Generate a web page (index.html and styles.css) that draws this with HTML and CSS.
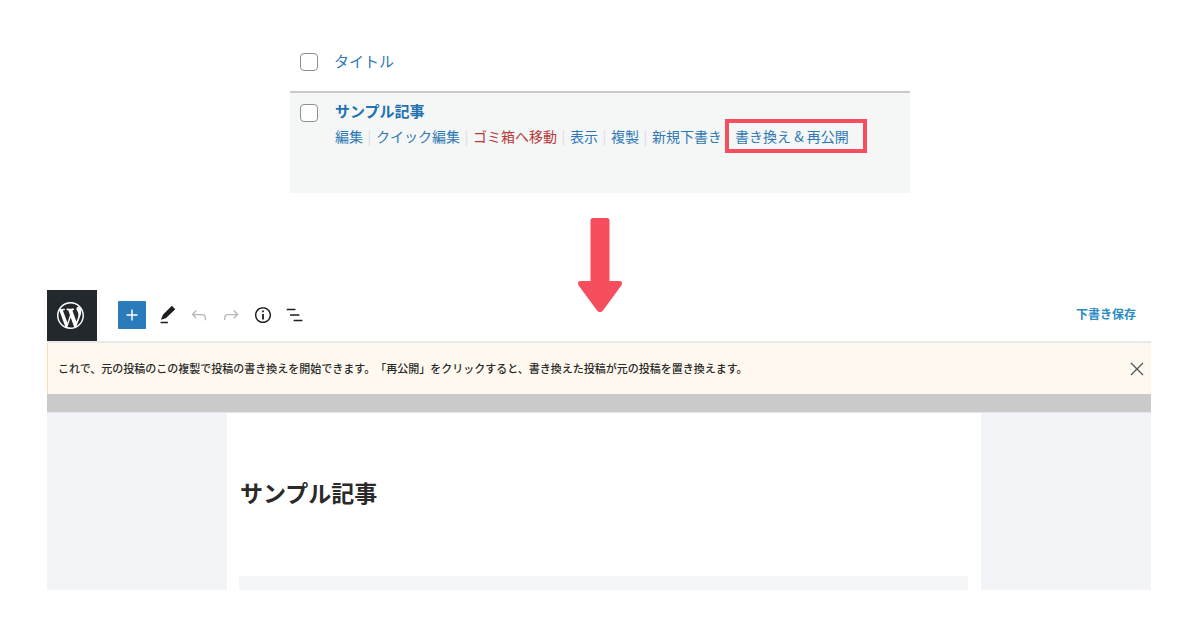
FILE: index.html
```html
<!DOCTYPE html>
<html lang="ja">
<head>
    <meta charset="UTF-8">
    <meta name="viewport" content="width=device-width, initial-scale=1.0">
    <title>サンプル記事</title>
    <link rel="stylesheet" href="styles.css">
</head>
<body>
    <section class="post-list">
        <div class="list-head">
            <input type="checkbox" id="check-all" aria-label="すべて選択">
            <a href="#" class="column-title">タイトル</a>
        </div>
        <div class="list-row">
            <input type="checkbox" id="check-post" aria-label="サンプル記事を選択">
            <div class="post">
                <a href="#" class="post-title">サンプル記事</a>
                <div class="row-actions">
                    <a href="#">編集</a><span>|</span>
                    <a href="#">クイック編集</a><span>|</span>
                    <a href="#" class="trash">ゴミ箱へ移動</a><span>|</span>
                    <a href="#">表示</a><span>|</span>
                    <a href="#">複製</a><span>|</span>
                    <a href="#">新規下書き</a><span>|</span>
                    <a href="#" class="highlight">書き換え &amp; 再公開</a>
                </div>
            </div>
        </div>
    </section>

    <svg class="arrow" viewBox="0 0 44 95" aria-hidden="true">
        <path d="M15 0h14q2.500 0 2.500 2.500V63H41.500q4 0.500 1.800 4.500L25 92.500q-3 3.500-6 0L0.700 67.500q-2.200-4 1.800-4.500H12.500V2.500Q12.500 0 15 0z"/>
    </svg>

    <section class="editor">
        <header class="toolbar">
            <a href="#" class="wp-logo" aria-label="投稿を表示">
                <svg viewBox="0 0 20 20">
                    <path d="M20 10c0-5.510-4.490-10-10-10S0 4.490 0 10c0 5.520 4.490 10 10 10s10-4.480 10-10zM7.780 15.370L4.370 6.220c.55-.02 1.170-.08 1.170-.08.5-.06.44-1.130-.06-1.110 0 0-1.450.11-2.370.11-.18 0-.37 0-.58-.01C4.120 2.690 6.870 1.110 10 1.110c2.330 0 4.450.87 6.050 2.340-.68-.11-1.650.39-1.650 1.580 0 .74.45 1.360.9 2.100.35.61.55 1.360.55 2.460 0 1.490-1.400 5-1.400 5l-3.030-8.370c.54-.02.82-.17.82-.17.5-.05.44-1.250-.06-1.220 0 0-1.440.12-2.380.12-.87 0-2.330-.12-2.330-.12-.5-.03-.56 1.200-.06 1.220l.92.080 1.260 3.410zM17.410 10c.24-.64.74-1.870.43-4.250.7 1.290 1.050 2.710 1.050 4.250 0 3.290-1.730 6.240-4.400 7.780.97-2.590 1.940-5.200 2.920-7.780zM6.100 18.090C3.120 16.650 1.110 13.530 1.110 10c0-1.300.23-2.480.72-3.590C3.250 10.300 4.670 14.200 6.100 18.090zm4.030-6.630l2.580 6.980c-.86.290-1.760.45-2.710.45-.79 0-1.570-.11-2.290-.33.810-2.380 1.620-4.740 2.420-7.100z"/>
                </svg>
            </a>
            <div class="tools">
                <button class="add" aria-label="ブロックを追加">
                    <svg viewBox="0 0 24 24"><path d="M18 11.200h-5.200V6h-1.600v5.200H6v1.600h5.200V18h1.600v-5.200H18z"/></svg>
                </button>
                <button aria-label="ツール">
                    <svg viewBox="0 0 24 24"><path d="M21 5.600L17.300 2 7.500 11.800l-2.100 5.400 5.300-1.700L21 5.600zM5 21h8v-1.700H5V21z"/></svg>
                </button>
                <button class="off" aria-label="元に戻す">
                    <svg viewBox="0 0 24 24"><path d="M18.300 11.700c-.6-.6-1.400-.9-2.300-.9H6.700l2.900-3.300-1.100-1-4.500 5L8.500 16l1-1-2.700-2.700H16c.5 0 .9.2 1.300.5 1 1 1 3.400 1 4.500v.3h1.500v-.2c0-1.500 0-4.300-1.500-5.700z"/></svg>
                </button>
                <button class="off" aria-label="やり直す">
                    <svg viewBox="0 0 24 24"><path d="M15.600 6.500l-1.100 1 2.900 3.300H8c-.9 0-1.700.3-2.300.9-1.400 1.500-1.400 4.200-1.400 5.600v.2h1.500v-.3c0-1.100 0-3.500 1-4.500.3-.3.700-.5 1.300-.5h9.200L14.500 15l1.100 1.100 4.600-4.600-4.600-5z"/></svg>
                </button>
                <button aria-label="詳細">
                    <svg viewBox="0 0 24 24"><path d="M12 3.200c-4.800 0-8.800 3.900-8.800 8.800 0 4.800 3.900 8.800 8.800 8.800 4.800 0 8.800-3.900 8.800-8.800 0-4.800-4-8.800-8.800-8.800zm0 16c-4 0-7.200-3.300-7.200-7.200C4.800 8 8 4.800 12 4.800s7.200 3.300 7.200 7.200c0 4-3.200 7.200-7.200 7.200zM11 17h2v-6h-2v6zm0-8h2V7h-2v2z"/></svg>
                </button>
                <button aria-label="リスト表示">
                    <svg viewBox="0 0 24 24"><path d="M12.500 5.200H3v1.700h9.500V5.200zm-2 12v1.700H20v-1.700h-9.500zm6.300-6H6.600v1.700h10.200v-1.700z"/></svg>
                </button>
            </div>
            <button class="save-draft">下書き保存</button>
        </header>
        <div class="notice">
            <p>これで、元の投稿のこの複製で投稿の書き換えを開始できます。「再公開」をクリックすると、書き換えた投稿が元の投稿を置き換えます。</p>
            <button class="close" aria-label="閉じる">
                <svg viewBox="0 0 14 14"><path d="M1 1l12 12M13 1L1 13"/></svg>
            </button>
        </div>
        <div class="divider"></div>
        <div class="canvas">
            <div class="page">
                <h1>サンプル記事</h1>
                <div class="block"></div>
            </div>
        </div>
    </section>
</body>
</html>
```

FILE: styles.css
```css
* {
    box-sizing: border-box;
}
body {
    margin: 0;
    padding: 32px 0 40px;
    font-family: "Noto Sans CJK JP", sans-serif;
    background-color: #ffffff;
    color: #2a2a2a;
}
a {
    color: #2e79b5;
    text-decoration: none;
}
button {
    border: none;
    background: none;
    padding: 0;
    font-family: inherit;
    cursor: pointer;
}
svg {
    display: block;
}
input[type="checkbox"] {
    appearance: none;
    flex: none;
    width: 18px;
    height: 18px;
    margin: 0;
    border: 1px solid #8c8f94;
    border-radius: 4px;
    background-color: #ffffff;
}

/* post list */
.post-list {
    max-width: 620px;
    margin: 0 auto;
}
.list-head {
    display: flex;
    align-items: center;
    gap: 16px;
    height: 59px;
    padding-left: 10px;
}
.column-title {
    padding-bottom: 2px;
    font-size: 15px;
    line-height: 20px;
}
.list-row {
    display: flex;
    gap: 17px;
    padding: 10px 10px 46px;
    border-top: 2px solid #c8cacc;
    background-color: #f5f7f7;
}
.list-row input {
    margin-top: 1px;
}
.post-title {
    display: block;
    font-size: 15px;
    font-weight: bold;
    line-height: 16px;
    color: #2271b1;
}
.row-actions {
    display: flex;
    margin-top: 6px;
    font-size: 14px;
    line-height: 22px;
    white-space: nowrap;
}
.row-actions span {
    width: 13px;
    text-align: center;
    color: #dcdcde;
}
.row-actions .trash {
    color: #b9383a;
}
.highlight {
    position: relative;
}
.highlight::after {
    content: "";
    position: absolute;
    inset: -6px -18px -6px -10px;
    border: 4px solid #f54e5e;
}

.arrow {
    width: 44px;
    height: 95px;
    margin: 25px auto -23px;
    fill: #f54e5e;
    position: relative;
    z-index: 1;
}

/* block editor */
.editor {
    margin: 0 49px 0 47px;
}
.toolbar {
    display: flex;
    align-items: center;
    padding-right: 15px;
    border-bottom: 2px solid #e8e9eb;
}
.wp-logo {
    display: flex;
    align-items: center;
    justify-content: center;
    width: 50px;
    height: 51px;
    padding-right: 4px;
    background-color: #23282d;
}
.wp-logo svg {
    width: 27px;
    height: 27px;
    fill: #ffffff;
}
.tools {
    display: flex;
    align-items: center;
    gap: 10px;
    margin-left: 21px;
    padding-bottom: 2px;
}
.tools svg {
    width: 22px;
    height: 22px;
    fill: #1e1e1e;
}
.tools .add {
    display: flex;
    align-items: center;
    justify-content: center;
    width: 28px;
    height: 28px;
    border-radius: 1px;
    background-color: #2b7bbb;
}
.tools .add svg {
    fill: #ffffff;
}
.tools .off svg {
    fill: #b8b8b8;
}
.save-draft {
    margin-left: auto;
    padding-bottom: 4px;
    font-size: 12px;
    font-weight: bold;
    line-height: 20px;
    color: #2b8cc0;
}
.notice {
    display: flex;
    align-items: center;
    justify-content: space-between;
    height: 51px;
    padding: 0 7px 0 10px;
    border-left: 1px solid #f5dfae;
    background-color: #fef8ee;
}
.notice p {
    margin: 0;
    padding-bottom: 2px;
    font-size: 11px;
    font-weight: 500;
    line-height: 16px;
    text-spacing-trim: space-all;
}
.close svg {
    width: 14px;
    height: 14px;
    fill: none;
    stroke: #50575e;
    stroke-width: 1.3;
}
.divider {
    height: 18px;
    background-color: #cacaca;
}
.canvas {
    padding: 0 170px 0 180px;
    border-top: 1px solid #e4e5e8;
    background-color: #f2f4f7;
}
.page {
    padding: 62px 13px 0 12px;
    background-color: #ffffff;
}
.page h1 {
    margin: 0 1px 67px;
    font-size: 23px;
    line-height: 34px;
}
.block {
    height: 14px;
    background-color: #f4f6f7;
}
```
